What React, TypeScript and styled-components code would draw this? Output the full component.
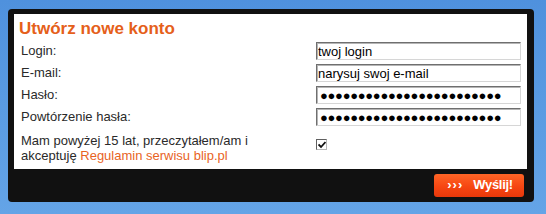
import React from "react";
import styled, { createGlobalStyle } from "styled-components";

const Global = createGlobalStyle`
  html, body {
    margin: 0;
    padding: 0;
  }
  body {
    width: 546px;
    height: 214px;
    overflow: hidden;
    background: linear-gradient(180deg, #4f91dd 0%, #5c9de3 60%, #64a4e7 100%);
    font-family: "Liberation Sans", Arial, sans-serif;
  }
`;

const Panel = styled.div`
  margin: 9px 0 0 8px;
  width: 526px;
  background: #111111;
  border-radius: 4px;
  padding: 5px 7px 0 6px;
  box-sizing: border-box;
`;

const Sheet = styled.form`
  background: #ffffff;
  padding: 5px 6px 6px 7px;
`;

const Title = styled.h1`
  margin: 0 0 3px -2px;
  font-size: 17px;
  line-height: 20px;
  font-weight: bold;
  color: #e5601a;
`;

const Grid = styled.div`
  display: grid;
  grid-template-columns: 295px 205px;
  row-gap: 4px;
`;

const Label = styled.label`
  font-size: 13px;
  line-height: 18px;
  color: #2a2a2a;
`;

const Field = styled.input`
  width: 205px;
  height: 18px;
  box-sizing: border-box;
  margin: 0;
  padding: 0 2px 0 1px;
  border: 1px solid;
  border-color: #6f6f6f #d6d6d6 #d6d6d6 #6f6f6f;
  box-shadow: inset 1px 1px 0 #b5b5b5;
  font-family: "Liberation Sans", Arial, sans-serif;
  font-size: 13px;
  color: #000;
  background: #fff;
  outline: none;
`;

const Secret = styled(Field)`
  font-size: 13px;
  letter-spacing: -0.3px;
  padding-left: 3px;
`;

const Consent = styled.div`
  grid-column: 1 / 3;
  display: grid;
  grid-template-columns: 295px 205px;
  margin-top: 3px;
`;

const ConsentText = styled.p`
  margin: 0;
  font-size: 13px;
  line-height: 15px;
  color: #2a2a2a;
`;

const Terms = styled.a`
  color: #e8631f;
  text-decoration: none;
`;

const Tick = styled.span`
  display: block;
  width: 11px;
  height: 11px;
  margin-top: 6px;
  box-sizing: border-box;
  border: 1px solid;
  border-color: #606060 #b8b8b8 #b8b8b8 #606060;
  background: #fff;
  position: relative;
  svg {
    position: absolute;
    left: 1px;
    top: 1px;
  }
`;

const Footer = styled.div`
  height: 33px;
  display: flex;
  align-items: center;
  justify-content: flex-end;
  padding-right: 3px;
`;

const Send = styled.button`
  width: 90px;
  height: 23px;
  margin-top: -1px;
  border: none;
  border-radius: 3px;
  background: linear-gradient(180deg, #ff6526 0%, #f64612 55%, #e8380b 100%);
  color: #fff;
  font-family: "Liberation Sans", Arial, sans-serif;
  font-weight: bold;
  font-size: 13px;
  letter-spacing: -0.3px;
  display: flex;
  align-items: center;
  justify-content: center;
  gap: 10px;
  padding: 0 0 1px 2px;
  cursor: pointer;
`;

const Arrows = styled.span`
  letter-spacing: 1px;
`;

const rows = [
  { id: "login", label: "Login:", value: "twoj login", secret: false },
  { id: "email", label: "E-mail:", value: "narysuj swoj e-mail", secret: false },
  { id: "pass", label: "Hasło:", value: "●".repeat(24), secret: true },
  { id: "pass2", label: "Powtórzenie hasła:", value: "●".repeat(24), secret: true },
];

export default function App() {
  return (
    <>
      <Global />
      <Panel>
        <Sheet onSubmit={(e) => e.preventDefault()}>
          <Title>Utwórz nowe konto</Title>
          <Grid>
            {rows.map((r) => (
              <React.Fragment key={r.id}>
                <Label htmlFor={r.id}>{r.label}</Label>
                {r.secret ? (
                  <Secret id={r.id} defaultValue={r.value} readOnly />
                ) : (
                  <Field id={r.id} defaultValue={r.value} />
                )}
              </React.Fragment>
            ))}
            <Consent>
              <ConsentText>
                Mam powyżej 15 lat, przeczytałem/am i
                <br />
                akceptuję <Terms href="#">Regulamin serwisu blip.pl</Terms>
              </ConsentText>
              <Tick role="checkbox" aria-checked="true">
                <svg width="8" height="8" viewBox="0 0 8 8">
                  <path d="M0.5 3.5 L3 6 L7.5 1" fill="none" stroke="#111" strokeWidth="1.8" />
                </svg>
              </Tick>
            </Consent>
          </Grid>
        </Sheet>
        <Footer>
          <Send type="submit">
            <Arrows>›››</Arrows>
            Wyślij!
          </Send>
        </Footer>
      </Panel>
    </>
  );
}
